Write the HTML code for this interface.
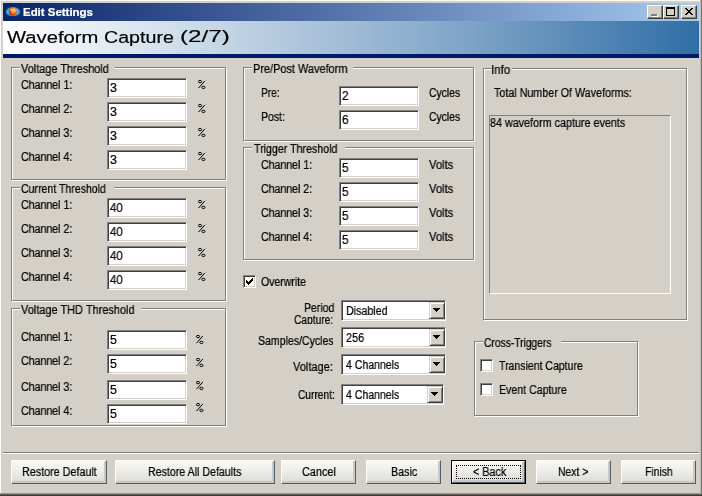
<!DOCTYPE html>
<html><head><meta charset="utf-8"><title>Edit Settings</title>
<style>
html,body{margin:0;padding:0;}
body{width:702px;height:496px;overflow:hidden;background:#d4d0c8;font-family:"Liberation Sans",sans-serif;font-size:12.5px;color:#000;position:relative;}
.a{position:absolute;}
.t{position:absolute;white-space:nowrap;line-height:16px;transform-origin:0 0;will-change:transform;-webkit-text-stroke:0.24px;}
.gb{position:absolute;box-sizing:border-box;border:1px solid #808080;box-shadow:1px 1px 0 #fff, inset 1px 1px 0 #fff;}
.lg{position:absolute;background:#d4d0c8;height:3px;}
.in{position:absolute;box-sizing:border-box;background:#fff;border:1px solid;border-color:#808080 #fff #fff #808080;box-shadow:inset 1px 1px 0 #404040, inset -1px -1px 0 #d4d0c8;height:20px;width:80px;}
.cb{position:absolute;box-sizing:border-box;width:13px;height:13px;background:#fff;border:1px solid;border-color:#808080 #fff #fff #808080;box-shadow:inset 1px 1px 0 #404040, inset -1px -1px 0 #d4d0c8;}
.btn{position:absolute;box-sizing:border-box;height:24px;top:460px;background:linear-gradient(#f8f8f6 0%,#efeeea 40%,#dedbd4 100%);border:1px solid;border-color:#fff #4e5f69 #4e5f69 #fff;box-shadow:inset -2px -2px 0 #cbc8c1;}
.combo{position:absolute;box-sizing:border-box;background:#fff;border:1px solid;border-color:#808080 #fff #fff #808080;box-shadow:inset 1px 1px 0 #404040, inset -1px -1px 0 #d4d0c8;height:21px;width:105px;left:341px;}
.dd{position:absolute;right:0px;top:1px;width:16px;height:17px;box-sizing:border-box;background:#d4d0c8;border:1px solid;border-color:#d4d0c8 #404040 #404040 #d4d0c8;box-shadow:inset 1px 1px 0 #fff, inset -1px -1px 0 #808080;}
.dd svg{position:absolute;left:3px;top:5px;}
.tb{position:absolute;box-sizing:border-box;top:5px;width:16px;height:14px;background:#d4d0c8;border:1px solid;border-color:#fff #404040 #404040 #fff;box-shadow:inset -1px -1px 0 #808080;}
</style></head><body>
<div class="a" style="left:0;top:0;width:702px;height:496px;background:#d4d0c8"></div>
<div class="a" style="left:0;top:0;width:702px;height:1px;background:#fbfbfa"></div>
<div class="a" style="left:0;top:0;width:1px;height:496px;background:#fbfbfa"></div>
<div class="a" style="left:3px;top:3px;width:696px;height:18px;background:linear-gradient(90deg,#0a246a 0%,#a6caf0 100%)"></div>
<svg class="a" style="left:4px;top:5px" width="18" height="14" viewBox="0 0 18 14">
<defs><radialGradient id="g1" cx="0.62" cy="0.38" r="0.7"><stop offset="0" stop-color="#fff6c0"/><stop offset="0.25" stop-color="#ffb030"/><stop offset="0.6" stop-color="#f05a10"/><stop offset="1" stop-color="#a01808"/></radialGradient>
<radialGradient id="g2" cx="0.5" cy="0.5" r="0.5"><stop offset="0" stop-color="#9fe0ff"/><stop offset="0.7" stop-color="#4fb4ee"/><stop offset="1" stop-color="#2a7fd0"/></radialGradient></defs>
<ellipse cx="9" cy="6.7" rx="7.3" ry="4.6" fill="url(#g2)"/>
<circle cx="8.8" cy="6.5" r="4.1" fill="url(#g1)"/>
<path d="M5.6 4.6 L8.8 6.6 L7.4 3.6 Z" fill="#9fe8f0" opacity="0.9"/>
</svg>
<div class="tb" style="left:647px"><div class="a" style="left:4px;top:9px;width:6px;height:2px;background:#fff"></div><div class="a" style="left:3px;top:8px;width:6px;height:2px;background:#808080"></div></div>
<div class="tb" style="left:663px"><div class="a" style="left:2px;top:1px;width:9px;height:9px;box-sizing:border-box;border:1px solid #000;border-top-width:2px"></div></div>
<div class="tb" style="left:681px"><svg class="a" style="left:3px;top:2px" width="8" height="7" viewBox="0 0 8 7" shape-rendering="crispEdges"><path d="M0 0h2v1h-2zM6 0h2v1h-2zM1 1h2v1h-2zM5 1h2v1h-2zM2 2h4v1h-4zM3 3h2v1h-2zM2 4h4v1h-4zM1 5h2v1h-2zM5 5h2v1h-2zM0 6h2v1h-2zM6 6h2v1h-2z" fill="#000"/></svg></div>
<div class="a" style="left:3px;top:21px;width:696px;height:33px;background:linear-gradient(90deg,#ffffff 0%,#c1d3e4 33%,#80a5c8 66%,#306ea5 100%)"></div>
<div class="a" style="left:3px;top:54px;width:696px;height:4px;background:#001a6b"></div>
<div class="a" style="left:700px;top:0;width:1px;height:496px;background:#bebbb5"></div>
<div class="a" style="left:701px;top:0;width:1px;height:496px;background:#777673"></div>
<div class="a" style="left:0;top:493px;width:702px;height:1px;background:#9a9894"></div>
<div class="a" style="left:0;top:494px;width:702px;height:1px;background:#5e5d5a"></div>
<div class="a" style="left:0;top:495px;width:702px;height:1px;background:#3c3c3a"></div>
<div class="gb" style="left:11px;top:67px;width:215px;height:113px"></div>
<div class="lg" style="left:20px;top:67px;width:95px"></div>
<div class="gb" style="left:11px;top:187px;width:215px;height:114px"></div>
<div class="lg" style="left:20px;top:187px;width:94px"></div>
<div class="gb" style="left:11px;top:308px;width:215px;height:118px"></div>
<div class="lg" style="left:20px;top:308px;width:121px"></div>
<div class="gb" style="left:243px;top:67px;width:231px;height:74px"></div>
<div class="lg" style="left:252px;top:67px;width:101px"></div>
<div class="gb" style="left:243px;top:147px;width:231px;height:113px"></div>
<div class="lg" style="left:252px;top:147px;width:93px"></div>
<div class="gb" style="left:483px;top:68px;width:204px;height:252px"></div>
<div class="lg" style="left:492px;top:68px;width:20px"></div>
<div class="gb" style="left:474px;top:341px;width:164px;height:75px"></div>
<div class="lg" style="left:483px;top:341px;width:78px"></div>
<div class="in" style="left:107px;top:78px"></div>
<div class="in" style="left:107px;top:102px"></div>
<div class="in" style="left:107px;top:126px"></div>
<div class="in" style="left:107px;top:150px"></div>
<div class="in" style="left:107px;top:198px"></div>
<div class="in" style="left:107px;top:222px"></div>
<div class="in" style="left:107px;top:246px"></div>
<div class="in" style="left:107px;top:270px"></div>
<div class="in" style="left:107px;top:330px"></div>
<div class="in" style="left:107px;top:354px"></div>
<div class="in" style="left:107px;top:380px"></div>
<div class="in" style="left:107px;top:404px"></div>
<div class="in" style="left:339px;top:86px"></div>
<div class="in" style="left:339px;top:110px"></div>
<div class="in" style="left:339px;top:158px"></div>
<div class="in" style="left:339px;top:182px"></div>
<div class="in" style="left:339px;top:206px"></div>
<div class="in" style="left:339px;top:230px"></div>
<svg class="a" style="left:197px;top:79px" width="10" height="11" viewBox="-1 -1 10 11"><g fill="none" stroke="#000" stroke-width="1"><ellipse cx="2" cy="1.6" rx="1.6" ry="1.2"/><ellipse cx="5.4" cy="7.4" rx="1.6" ry="1.2"/><path d="M6.9 0.9 L0.5 8.1"/></g></svg>
<svg class="a" style="left:197px;top:103px" width="10" height="11" viewBox="-1 -1 10 11"><g fill="none" stroke="#000" stroke-width="1"><ellipse cx="2" cy="1.6" rx="1.6" ry="1.2"/><ellipse cx="5.4" cy="7.4" rx="1.6" ry="1.2"/><path d="M6.9 0.9 L0.5 8.1"/></g></svg>
<svg class="a" style="left:197px;top:127px" width="10" height="11" viewBox="-1 -1 10 11"><g fill="none" stroke="#000" stroke-width="1"><ellipse cx="2" cy="1.6" rx="1.6" ry="1.2"/><ellipse cx="5.4" cy="7.4" rx="1.6" ry="1.2"/><path d="M6.9 0.9 L0.5 8.1"/></g></svg>
<svg class="a" style="left:197px;top:151px" width="10" height="11" viewBox="-1 -1 10 11"><g fill="none" stroke="#000" stroke-width="1"><ellipse cx="2" cy="1.6" rx="1.6" ry="1.2"/><ellipse cx="5.4" cy="7.4" rx="1.6" ry="1.2"/><path d="M6.9 0.9 L0.5 8.1"/></g></svg>
<svg class="a" style="left:197px;top:199px" width="10" height="11" viewBox="-1 -1 10 11"><g fill="none" stroke="#000" stroke-width="1"><ellipse cx="2" cy="1.6" rx="1.6" ry="1.2"/><ellipse cx="5.4" cy="7.4" rx="1.6" ry="1.2"/><path d="M6.9 0.9 L0.5 8.1"/></g></svg>
<svg class="a" style="left:197px;top:223px" width="10" height="11" viewBox="-1 -1 10 11"><g fill="none" stroke="#000" stroke-width="1"><ellipse cx="2" cy="1.6" rx="1.6" ry="1.2"/><ellipse cx="5.4" cy="7.4" rx="1.6" ry="1.2"/><path d="M6.9 0.9 L0.5 8.1"/></g></svg>
<svg class="a" style="left:197px;top:247px" width="10" height="11" viewBox="-1 -1 10 11"><g fill="none" stroke="#000" stroke-width="1"><ellipse cx="2" cy="1.6" rx="1.6" ry="1.2"/><ellipse cx="5.4" cy="7.4" rx="1.6" ry="1.2"/><path d="M6.9 0.9 L0.5 8.1"/></g></svg>
<svg class="a" style="left:197px;top:271px" width="10" height="11" viewBox="-1 -1 10 11"><g fill="none" stroke="#000" stroke-width="1"><ellipse cx="2" cy="1.6" rx="1.6" ry="1.2"/><ellipse cx="5.4" cy="7.4" rx="1.6" ry="1.2"/><path d="M6.9 0.9 L0.5 8.1"/></g></svg>
<svg class="a" style="left:195px;top:334px" width="10" height="11" viewBox="-1 -1 10 11"><g fill="none" stroke="#000" stroke-width="1"><ellipse cx="2" cy="1.6" rx="1.6" ry="1.2"/><ellipse cx="5.4" cy="7.4" rx="1.6" ry="1.2"/><path d="M6.9 0.9 L0.5 8.1"/></g></svg>
<svg class="a" style="left:195px;top:357px" width="10" height="11" viewBox="-1 -1 10 11"><g fill="none" stroke="#000" stroke-width="1"><ellipse cx="2" cy="1.6" rx="1.6" ry="1.2"/><ellipse cx="5.4" cy="7.4" rx="1.6" ry="1.2"/><path d="M6.9 0.9 L0.5 8.1"/></g></svg>
<svg class="a" style="left:195px;top:380px" width="10" height="11" viewBox="-1 -1 10 11"><g fill="none" stroke="#000" stroke-width="1"><ellipse cx="2" cy="1.6" rx="1.6" ry="1.2"/><ellipse cx="5.4" cy="7.4" rx="1.6" ry="1.2"/><path d="M6.9 0.9 L0.5 8.1"/></g></svg>
<svg class="a" style="left:195px;top:402px" width="10" height="11" viewBox="-1 -1 10 11"><g fill="none" stroke="#000" stroke-width="1"><ellipse cx="2" cy="1.6" rx="1.6" ry="1.2"/><ellipse cx="5.4" cy="7.4" rx="1.6" ry="1.2"/><path d="M6.9 0.9 L0.5 8.1"/></g></svg>
<div class="a" style="left:489px;top:115px;width:182px;height:179px;box-sizing:border-box;border:1px solid;border-color:#808080 #fff #fff #808080"></div>
<div class="cb" style="left:243px;top:275px"><svg class="a" style="left:2px;top:2px" width="7" height="7" viewBox="0 0 7 7" shape-rendering="crispEdges"><path d="M0 2h1v3h-1zM1 3h1v3h-1zM2 4h1v3h-1zM3 3h1v3h-1zM4 2h1v3h-1zM5 1h1v3h-1zM6 0h1v3h-1z" fill="#000"/></svg></div>
<div class="cb" style="left:480px;top:359px"></div>
<div class="cb" style="left:480px;top:383px"></div>
<div class="combo" style="top:300px;"><div class="dd"><svg width="7" height="4" viewBox="0 0 7 4" shape-rendering="crispEdges"><path d="M0 0h7v1h-7zM1 1h5v1h-5zM2 2h3v1h-3zM3 3h1v1h-1z" fill="#000"/></svg></div></div>
<div class="combo" style="top:327px;"><div class="dd"><svg width="7" height="4" viewBox="0 0 7 4" shape-rendering="crispEdges"><path d="M0 0h7v1h-7zM1 1h5v1h-5zM2 2h3v1h-3zM3 3h1v1h-1z" fill="#000"/></svg></div></div>
<div class="combo" style="top:354px;"><div class="dd"><svg width="7" height="4" viewBox="0 0 7 4" shape-rendering="crispEdges"><path d="M0 0h7v1h-7zM1 1h5v1h-5zM2 2h3v1h-3zM3 3h1v1h-1z" fill="#000"/></svg></div></div>
<div class="combo" style="top:384px;width:103px;"><div class="dd"><svg width="7" height="4" viewBox="0 0 7 4" shape-rendering="crispEdges"><path d="M0 0h7v1h-7zM1 1h5v1h-5zM2 2h3v1h-3zM3 3h1v1h-1z" fill="#000"/></svg></div></div>
<div class="a" style="left:3px;top:452px;width:696px;height:1px;background:#808080"></div>
<div class="a" style="left:3px;top:453px;width:696px;height:1px;background:#fff"></div>
<div class="btn" style="left:11px;width:96px"></div>
<div class="btn" style="left:115px;width:160px"></div>
<div class="btn" style="left:281px;width:75px"></div>
<div class="btn" style="left:366px;width:75px"></div>
<div class="a" style="left:451px;top:460px;width:75px;height:24px;box-sizing:border-box;border:1px solid #000"></div>
<div class="btn" style="left:452px;top:461px;width:73px;height:22px"></div>
<div class="a" style="left:456px;top:465px;width:65px;height:14px;box-sizing:border-box;border:1px dotted #000"></div>
<div class="btn" style="left:536px;width:75px"></div>
<div class="btn" style="left:621px;width:75px"></div>
<div class="t" style="left:20.60px;top:61px;transform:scaleX(0.8740);">Voltage Threshold</div>
<div class="t" style="left:21.10px;top:181px;transform:scaleX(0.8440);">Current Threshold</div>
<div class="t" style="left:20.60px;top:302px;transform:scaleX(0.8775);">Voltage THD Threshold</div>
<div class="t" style="left:21.10px;top:77px;transform:scaleX(0.8483);">Channel 1:</div>
<div class="t" style="left:21.10px;top:101px;transform:scaleX(0.8483);">Channel 2:</div>
<div class="t" style="left:21.10px;top:125px;transform:scaleX(0.8483);">Channel 3:</div>
<div class="t" style="left:21.10px;top:149px;transform:scaleX(0.8483);">Channel 4:</div>
<div class="t" style="left:21.10px;top:197px;transform:scaleX(0.8483);">Channel 1:</div>
<div class="t" style="left:21.10px;top:221px;transform:scaleX(0.8483);">Channel 2:</div>
<div class="t" style="left:21.10px;top:245px;transform:scaleX(0.8483);">Channel 3:</div>
<div class="t" style="left:21.10px;top:269px;transform:scaleX(0.8483);">Channel 4:</div>
<div class="t" style="left:21.10px;top:329px;transform:scaleX(0.8483);">Channel 1:</div>
<div class="t" style="left:21.10px;top:353px;transform:scaleX(0.8483);">Channel 2:</div>
<div class="t" style="left:21.10px;top:379px;transform:scaleX(0.8483);">Channel 3:</div>
<div class="t" style="left:21.10px;top:403px;transform:scaleX(0.8483);">Channel 4:</div>
<div class="t" style="left:253.40px;top:61px;transform:scaleX(0.8750);">Pre/Post Waveform</div>
<div class="t" style="left:253.80px;top:141px;transform:scaleX(0.8510);">Trigger Threshold</div>
<div class="t" style="left:261.20px;top:85px;transform:scaleX(0.8130);">Pre:</div>
<div class="t" style="left:261.20px;top:109px;transform:scaleX(0.8393);">Post:</div>
<div class="t" style="left:429.30px;top:85px;transform:scaleX(0.8289);">Cycles</div>
<div class="t" style="left:429.30px;top:109px;transform:scaleX(0.8289);">Cycles</div>
<div class="t" style="left:261.30px;top:157px;transform:scaleX(0.8450);">Channel 1:</div>
<div class="t" style="left:428.60px;top:157px;transform:scaleX(0.8963);">Volts</div>
<div class="t" style="left:261.30px;top:181px;transform:scaleX(0.8450);">Channel 2:</div>
<div class="t" style="left:428.60px;top:181px;transform:scaleX(0.8963);">Volts</div>
<div class="t" style="left:261.30px;top:205px;transform:scaleX(0.8450);">Channel 3:</div>
<div class="t" style="left:428.60px;top:205px;transform:scaleX(0.8963);">Volts</div>
<div class="t" style="left:261.30px;top:229px;transform:scaleX(0.8450);">Channel 4:</div>
<div class="t" style="left:428.60px;top:229px;transform:scaleX(0.8963);">Volts</div>
<div class="t" style="left:261.20px;top:274px;transform:scaleX(0.8407);">Overwrite</div>
<div class="t" style="left:303.50px;top:300px;transform:scaleX(0.8389);">Period</div>
<div class="t" style="left:293.50px;top:312px;transform:scaleX(0.8167);height:12px;overflow:hidden;">Capture:</div>
<div class="t" style="left:257.60px;top:333px;transform:scaleX(0.8433);">Samples/Cycles</div>
<div class="t" style="left:292.60px;top:359px;transform:scaleX(0.8822);">Voltage:</div>
<div class="t" style="left:298.30px;top:387px;transform:scaleX(0.8133);">Current:</div>
<div class="t" style="left:491.29px;top:62px;transform:scaleX(0.9150);">Info</div>
<div class="t" style="left:493.70px;top:85px;transform:scaleX(0.8575);">Total Number Of Waveforms:</div>
<div class="t" style="left:490.30px;top:115px;transform:scaleX(0.8611);">84 waveform capture events</div>
<div class="t" style="left:484.30px;top:335px;transform:scaleX(0.8207);">Cross-Triggers</div>
<div class="t" style="left:498.60px;top:358px;transform:scaleX(0.8410);">Transient Capture</div>
<div class="t" style="left:498.60px;top:382px;transform:scaleX(0.8487);">Event Capture</div>
<div class="t" style="left:22.20px;top:464px;transform:scaleX(0.8609);">Restore Default</div>
<div class="t" style="left:148.30px;top:464px;transform:scaleX(0.8500);">Restore All Defaults</div>
<div class="t" style="left:302.10px;top:464px;transform:scaleX(0.8692);">Cancel</div>
<div class="t" style="left:391.40px;top:464px;transform:scaleX(0.8581);">Basic</div>
<div class="t" style="left:472.60px;top:464px;transform:scaleX(0.8641);">&lt; Back</div>
<div class="t" style="left:558.10px;top:464px;transform:scaleX(0.8297);">Next &gt;</div>
<div class="t" style="left:645.40px;top:464px;transform:scaleX(0.8273);">Finish</div>
<div class="t" style="left:110.40px;top:80px;transform:scaleX(0.9857);">3</div>
<div class="t" style="left:110.40px;top:104px;transform:scaleX(0.9857);">3</div>
<div class="t" style="left:110.40px;top:128px;transform:scaleX(0.9857);">3</div>
<div class="t" style="left:110.40px;top:152px;transform:scaleX(0.9857);">3</div>
<div class="t" style="left:110.40px;top:200px;transform:scaleX(0.9071);">40</div>
<div class="t" style="left:110.40px;top:224px;transform:scaleX(0.9071);">40</div>
<div class="t" style="left:110.40px;top:248px;transform:scaleX(0.9071);">40</div>
<div class="t" style="left:110.40px;top:272px;transform:scaleX(0.9071);">40</div>
<div class="t" style="left:110.40px;top:332px;transform:scaleX(0.9857);">5</div>
<div class="t" style="left:110.40px;top:356px;transform:scaleX(0.9857);">5</div>
<div class="t" style="left:110.40px;top:382px;transform:scaleX(0.9857);">5</div>
<div class="t" style="left:110.40px;top:406px;transform:scaleX(0.9857);">5</div>
<div class="t" style="left:342.30px;top:88px;transform:scaleX(0.9429);">2</div>
<div class="t" style="left:342.30px;top:112px;transform:scaleX(0.9429);">6</div>
<div class="t" style="left:342.30px;top:160px;transform:scaleX(0.9429);">5</div>
<div class="t" style="left:342.30px;top:184px;transform:scaleX(0.9429);">5</div>
<div class="t" style="left:342.30px;top:208px;transform:scaleX(0.9429);">5</div>
<div class="t" style="left:342.30px;top:232px;transform:scaleX(0.9429);">5</div>
<div class="t" style="left:345.60px;top:303px;transform:scaleX(0.8551);">Disabled</div>
<div class="t" style="left:345.50px;top:330px;transform:scaleX(0.8667);">256</div>
<div class="t" style="left:345.50px;top:357px;transform:scaleX(0.8413);">4 Channels</div>
<div class="t" style="left:345.50px;top:387px;transform:scaleX(0.8413);">4 Channels</div>
<div class="t" style="left:23.00px;top:4px;transform:scaleX(1.0403);font-size:11px;font-weight:bold;color:#fff;">Edit Settings</div>
<div class="t" style="left:6.80px;top:30px;transform:scaleX(1.2040);font-size:16.8px;-webkit-text-stroke:0.18px;">Waveform</div>
<div class="t" style="left:103.90px;top:30px;transform:scaleX(1.1712);font-size:16.8px;-webkit-text-stroke:0.18px;">Capture</div>
<div class="t" style="left:180.30px;top:29px;transform:scaleX(1.4412);font-size:16.8px;-webkit-text-stroke:0.18px;">(2/7)</div>
</body></html>
